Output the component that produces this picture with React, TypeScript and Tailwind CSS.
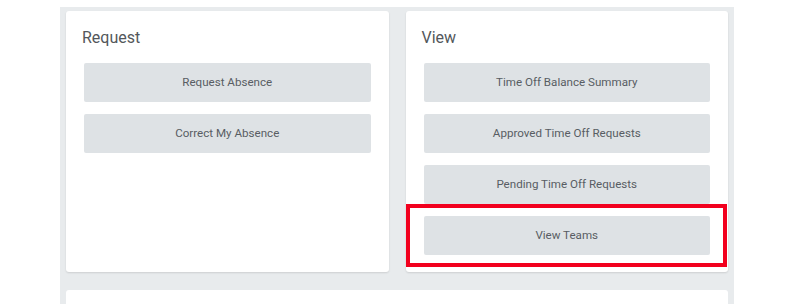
import React from "react";

function Btn({ label }: { label: string }) {
  return (
    <div className="h-[39px] w-full rounded-[2px] bg-[#dee2e5] flex items-center justify-center text-[11.6px] leading-[14px] text-[#585d63] pb-[1px]">
      {label}
    </div>
  );
}

function Card({ title, items, children }: { title: string; items: string[]; children?: React.ReactNode }) {
  return (
    <div className="relative bg-white rounded-[3px] shadow-[0_1px_2px_rgba(0,0,0,0.12)] pt-[17px] pb-[17px] px-[18px]">
      <div className="text-[16px] leading-[20px] text-[#53575b] -ml-[2px]">{title}</div>
      <div className="mt-[15px] flex flex-col gap-[12px]">
        {items.map((it) => (
          <Btn key={it} label={it} />
        ))}
      </div>
      {children}
    </div>
  );
}

export default function App() {
  return (
    <div className="w-[795px] h-[304px] bg-white overflow-hidden" style={{ fontFamily: "Roboto, 'Liberation Sans', sans-serif" }}>
      <div className="ml-[60px] mt-[7px] w-[674px] h-[297px] bg-[#e8ebed] px-[6px] pt-[4px]">
        <div className="grid grid-cols-2 gap-[17px] h-[260px]">
          <Card title="Request" items={["Request Absence", "Correct My Absence"]} />
          <Card
            title="View"
            items={["Time Off Balance Summary", "Approved Time Off Requests", "Pending Time Off Requests", "View Teams"]}
          >
            <div className="absolute left-0 top-[193px] w-[321px] h-[63px] border-4 border-[#f2001e]" />
          </Card>
        </div>
        <div className="mt-[19px] h-[20px] bg-white rounded-t-[3px]" />
      </div>
    </div>
  );
}
